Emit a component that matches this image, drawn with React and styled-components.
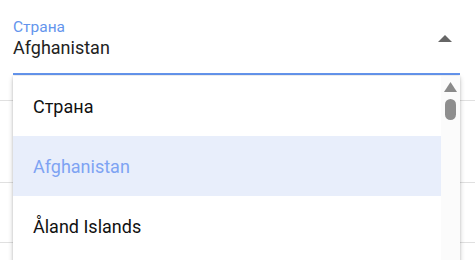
import React from "react";
import styled, { createGlobalStyle } from "styled-components";

const GlobalStyle = createGlobalStyle`
  html, body {
    margin: 0;
    padding: 0;
    background: #fff;
    font-family: Roboto, "Noto Sans", Arial, sans-serif;
  }
`;

const Page = styled.div`
  position: relative;
  width: 475px;
  height: 260px;
  overflow: hidden;
`;

const Field = styled.div`
  margin: 0 15px 0 13px;
  padding-top: 16px;
  height: 57px;
  border-bottom: 2px solid #6495ed;
  display: flex;
  align-items: flex-end;
  justify-content: space-between;
  position: relative;
`;

const FieldText = styled.div`
  display: flex;
  flex-direction: column;
  padding-bottom: 13px;
`;

const Label = styled.label`
  font-size: 15.5px;
  line-height: 18px;
  color: #6495ed;
`;

const Value = styled.div`
  font-size: 18px;
  line-height: 24px;
  color: #222;
`;

const Caret = styled.svg`
  width: 14px;
  height: 7px;
  margin: 0 8px 31px 0;
  fill: #666;
`;

const Divider = styled.div`
  height: ${(p) => p.$gap}px;
  border-bottom: 1px solid #e0e0e0;
`;

const Menu = styled.div`
  position: absolute;
  left: 13px;
  top: 76px;
  width: 447px;
  height: 200px;
  background: #fff;
  box-shadow: 0 2px 5px rgba(0, 0, 0, 0.22), 0 0 2px rgba(0, 0, 0, 0.12);
  display: flex;
`;

const List = styled.ul`
  list-style: none;
  margin: 0;
  padding: 0;
  flex: 1;
`;

const Option = styled.li`
  height: 60px;
  display: flex;
  align-items: center;
  padding-left: 20px;
  font-size: 18px;
  color: ${(p) => (p.$selected ? "#7ea3f3" : "#111")};
  background: ${(p) => (p.$selected ? "#e8eefb" : "transparent")};
`;

const Scrollbar = styled.div`
  width: 19px;
  background: #fbfbfb;
  display: flex;
  flex-direction: column;
  align-items: center;
  padding-top: 6px;
  gap: 7px;
`;

const ScrollArrow = styled.svg`
  width: 13px;
  height: 10px;
  fill: #8a8a8a;
`;

const Thumb = styled.div`
  width: 11px;
  height: 21px;
  border-radius: 6px;
  background: #8e8e8e;
`;

const options = ["Страна", "Afghanistan", "Åland Islands"];

export default function App() {
  return (
    <Page>
      <GlobalStyle />
      <Field>
        <FieldText>
          <Label>Страна</Label>
          <Value>Afghanistan</Value>
        </FieldText>
        <Caret viewBox="0 0 14 7">
          <path d="M0 7 L7 0 L14 7 Z" />
        </Caret>
      </Field>
      <Divider $gap={25} />
      <Divider $gap={81} />
      <Divider $gap={59} />

      <Menu>
        <List>
          {options.map((o) => (
            <Option key={o} $selected={o === "Afghanistan"}>
              {o}
            </Option>
          ))}
        </List>
        <Scrollbar>
          <ScrollArrow viewBox="0 0 13 10">
            <path d="M0 10 L6.5 0 L13 10 Z" />
          </ScrollArrow>
          <Thumb />
        </Scrollbar>
      </Menu>
    </Page>
  );
}
